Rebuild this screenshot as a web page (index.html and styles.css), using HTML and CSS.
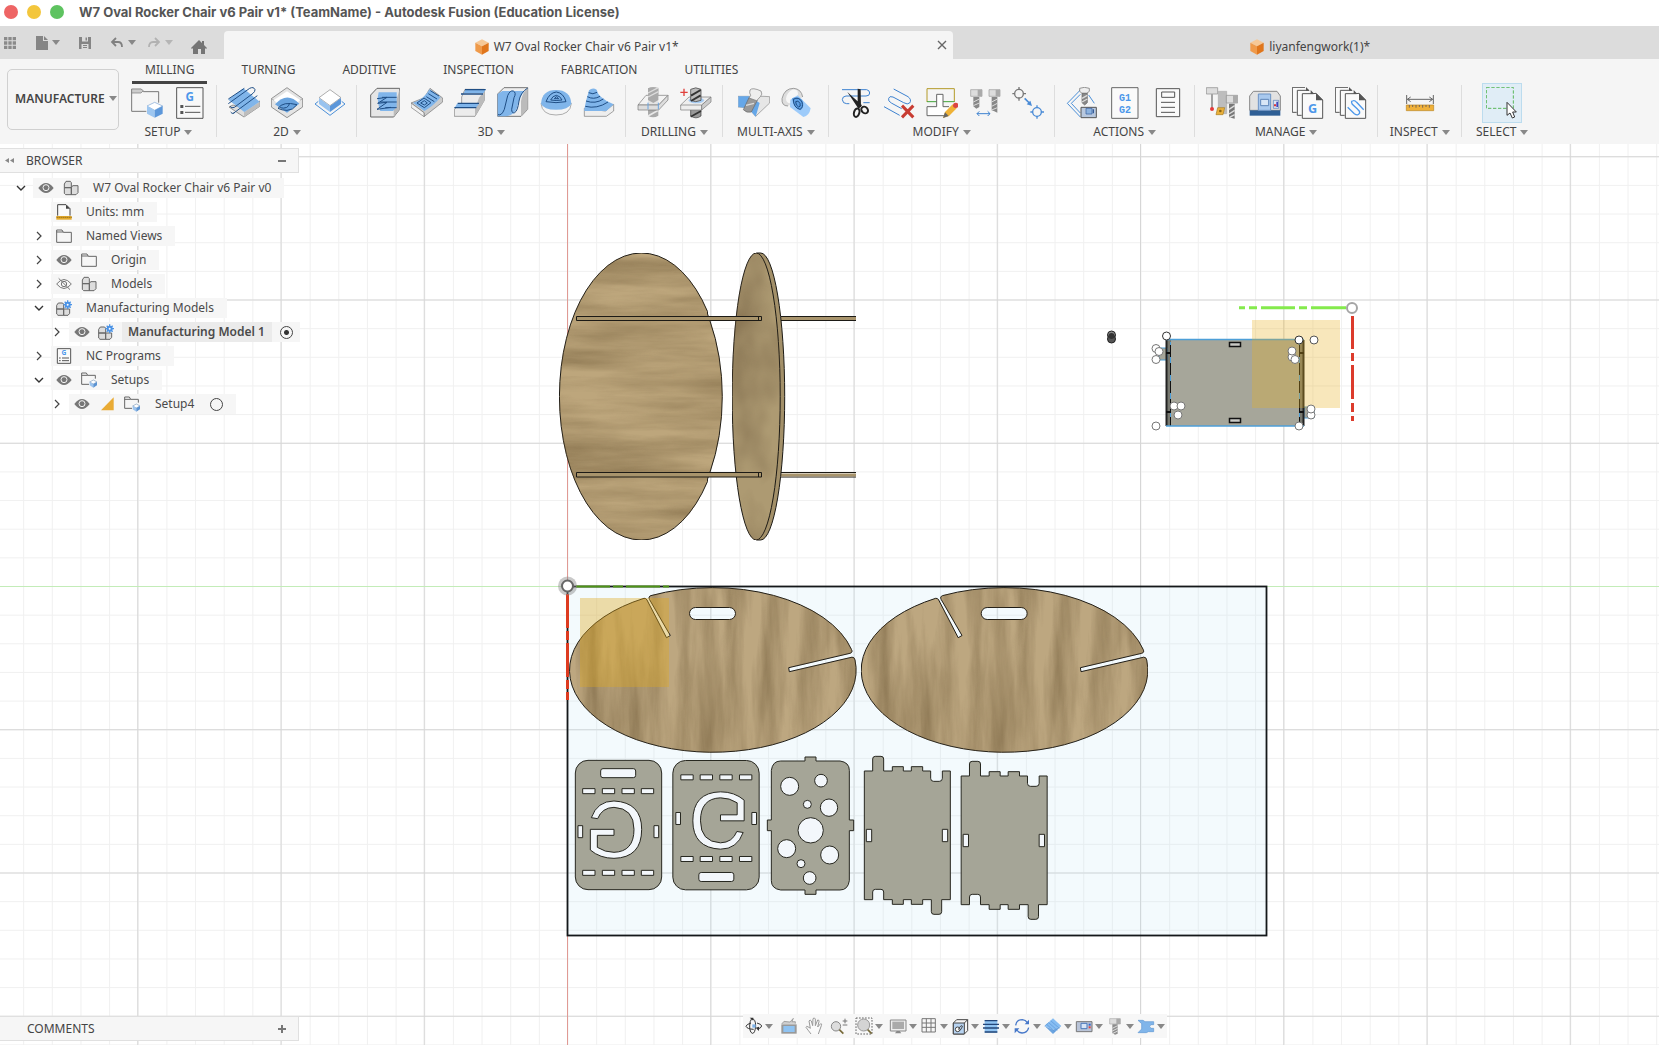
FILE: index.html
```html
<!DOCTYPE html>
<html lang="en">
<head>
<meta charset="utf-8">
<title>W7 Oval Rocker Chair v6 Pair v1* (TeamName) - Autodesk Fusion (Education License)</title>
<link rel="stylesheet" href="styles.css">
</head>
<body>
<svg class="sprites" width="0" height="0" aria-hidden="true">
  <symbol id="eye" viewBox="0 0 48 36"><path d="M1 18Q24 -12 47 18Q24 48 1 18Z" fill="#777"/><circle cx="24" cy="17" r="9" fill="none" stroke="#f4f4f4" stroke-width="3"/></symbol>
  <symbol id="eye-off" viewBox="0 0 48 36"><path d="M2 18Q24 -9 46 18Q24 45 2 18Z" fill="none" stroke="#777" stroke-width="3"/><circle cx="24" cy="18" r="8" fill="none" stroke="#777" stroke-width="3"/><path d="M8 1L42 35" stroke="#777" stroke-width="3"/></symbol>
  <symbol id="folder" viewBox="0 0 48 48"><path d="M2 11V43H46V13H22L18 6H2V12H22" fill="none" stroke="#666" stroke-width="3"/></symbol>
  <symbol id="component" viewBox="0 0 48 48"><path d="M4 23V12L9 4H22L25 8V23Z M4 23H25V44H8L4 40Z M25 23L29 17H45V38L39 44H25Z" fill="#ddd" stroke="#666" stroke-width="3" stroke-linejoin="round"/></symbol>
  <symbol id="mfg-model" viewBox="0 0 48 48"><path d="M2 27V16L7 9H20L23 13V27Z M2 27H23V46H6L2 42Z M23 27H41V40L36 46H23Z" fill="#ddd" stroke="#666" stroke-width="3" stroke-linejoin="round"/><circle cx="35" cy="14" r="9" fill="#4b93e6"/><path d="M35 1V27M22 14H48M26 5L44 23M44 5L26 23" stroke="#4b93e6" stroke-width="4"/><circle cx="35" cy="14" r="3" fill="#fff"/></symbol>
  <symbol id="setup-folder" viewBox="0 0 48 48"><path d="M24 37H2V3H16L20 10H43V20M2 10H20" fill="none" stroke="#666" stroke-width="3"/><path d="M37 24L48 30L37 36L26 30Z" fill="#fff" stroke="#7f9dbd" stroke-width="2"/><path d="M26 30V40L37 47V36Z" fill="#9bc3ee"/><path d="M48 30V40L37 47V36Z" fill="#5b93d2"/></symbol>
  <symbol id="orange-cube" viewBox="0 0 42 48"><path d="M21 1L41 11L21 22L1 11Z" fill="#f6c896"/><path d="M1 11L21 22V47L1 36Z" fill="#ef9a4a"/><path d="M41 11L21 22V47L41 36Z" fill="#e0761c"/></symbol>
  <symbol id="chev-right" viewBox="0 0 12 12"><path d="M4 2L8 6L4 10" fill="none" stroke="#444" stroke-width="1.2"/></symbol>
  <symbol id="chev-down" viewBox="0 0 12 12"><path d="M2 4L6 8L10 4" fill="none" stroke="#333" stroke-width="1.4"/></symbol>
</svg>

<header class="titlebar">
  <div class="lights"><span class="light red"></span><span class="light yellow"></span><span class="light green"></span></div>
  <h1>W7 Oval Rocker Chair v6 Pair v1* (TeamName) - Autodesk Fusion (Education License)</h1>
</header>

<div class="tabbar">
  <div class="quick">
    <button aria-label="Data panel"><svg width="12" height="12" viewBox="0 0 36 36"><path d="M0 0h10v10H0zM13 0h10v10H13zM26 0h10v10H26zM0 13h10v10H0zM13 13h10v10H13zM26 13h10v10H26zM0 26h10v10H0zM13 26h10v10H13zM26 26h10v10H26z" fill="#8a8a8a"/></svg></button>
    <button aria-label="File"><svg width="14" height="14" viewBox="0 0 14 14"><path d="M2 0h7v5h5v9H2z M10 0l4 4h-4z" fill="#858585"/></svg><i class="caret"></i></button>
    <button aria-label="Save"><svg width="14" height="14" viewBox="0 0 28 28"><path d="M2 2h24v24H2z" fill="#858585"/><path d="M8 2h12v9H8zM7 16h14v10H7z" fill="#dcdcdc"/><path d="M15 3h3v6h-3zM10 18h8v2h-8zM10 22h8v2h-8z" fill="#858585"/></svg></button>
    <div class="history">
      <button aria-label="Undo"><svg width="14" height="14" viewBox="0 0 14 14"><path d="M6 2L2 6L6 10M3 6H8Q12 6 12 11" fill="none" stroke="#808080" stroke-width="1.8"/></svg><i class="caret"></i></button>
      <button aria-label="Redo" class="faded"><svg width="14" height="14" viewBox="0 0 14 14"><path d="M8 2L12 6L8 10M11 6H6Q2 6 2 11" fill="none" stroke="#808080" stroke-width="1.8"/></svg><i class="caret"></i></button>
    </div>
    <button class="home" aria-label="Home"><svg width="16" height="14" viewBox="0 0 16 14"><path d="M8 0L11 3V1h2v4l3 3-1 1-1-1v6h-4V9H7v5H2V8L1 9 0 8z" fill="#757575"/></svg></button>
  </div>
  <div class="doc active"><a href="#doc1"><svg width="14" height="16"><use href="#orange-cube"/></svg>W7 Oval Rocker Chair v6 Pair v1*</a>
    <button class="close" aria-label="Close tab"><svg width="10" height="10" viewBox="0 0 10 10"><path d="M1 1L9 9M9 1L1 9" stroke="#666" stroke-width="1.4"/></svg></button></div>
  <div class="doc"><a href="#doc2"><svg width="14" height="16"><use href="#orange-cube"/></svg>liyanfengwork(1)*</a></div>
</div>

<div class="ribbon">
  <button class="workspace">MANUFACTURE<i class="caret"></i></button>
  <div class="ribbon-main">
    <nav class="modes">
      <a href="#milling" class="on">MILLING</a><a href="#turning">TURNING</a><a href="#additive">ADDITIVE</a><a href="#inspection">INSPECTION</a><a href="#fabrication">FABRICATION</a><a href="#utilities">UTILITIES</a>
    </nav>
    <div class="groups">
      <section class="group"><div class="icons">
        <button aria-label="Setup"><svg viewBox="396 258 96 96"><path d="M479 305V272H433L426 265H398V331H442" fill="none" stroke="#777" stroke-width="3"/><path d="M398 264H426L433 269L426 276H398Z" fill="#ccc" stroke="#777" stroke-width="2"/><path d="M467 304L491 315L467 328L444 315Z" fill="#fff" stroke="#7aa5d4" stroke-width="2"/><path d="M444 315L467 328V350L444 338Z" fill="#9dc6f0"/><path d="M491 315L467 328V350L491 338Z" fill="#5c97da"/></svg></button>
        <button aria-label="NC program"><svg viewBox="524 258 96 96"><path d="M532 260H611V352H532Z" fill="#f8f8f8" stroke="#555" stroke-width="3"/><text x="571" y="300" text-anchor="middle" font-size="35" font-weight="700" fill="#4c97ea">G</text><path d="M543 312h9v9h-9zM543 330h9v9h-9z" fill="#555"/><path d="M557 316H603M557 334H603" stroke="#555" stroke-width="3"/></svg></button>
      </div><button class="label">SETUP<i class="caret"></i></button></section>

      <section class="group"><div class="icons">
        <button aria-label="2D adaptive"><svg viewBox="687 258 96 96"><path d="M690 318L735 348L782 316V300L735 322L702 312Z" fill="#ddd" stroke="#666" stroke-width="2"/><path d="M735 334V348L782 316V302Z" fill="#bdbdbd"/><path d="M688 296L733 262L782 302L736 333Z" fill="#80b5ea"/><g fill="none" stroke="#1f4e85" stroke-width="3"><path d="M688 308L752 262Q764 256 768 266Q768 272 762 277L706 319Q698 323 693 316"/><path d="M688 294L736 262M703 337L775 284M695 333Q698 340 706 336"/></g></svg></button>
        <button aria-label="2D pocket"><svg viewBox="816 258 96 96"><path d="M817 293L864 260L911 293V318L864 350L817 318Z" fill="#e4e4e4" stroke="#666" stroke-width="2"/><path d="M817 293L864 322L911 293" fill="none" stroke="#999" stroke-width="2"/><path d="M824 298L864 271L904 298L864 334Z" fill="#fff"/><path d="M828 310Q864 270 901 308L864 335Z" fill="#6aa4df"/><path d="M837 322Q852 300 894 311Q882 328 864 328Q848 328 837 322M842 320Q868 326 872 306" fill="none" stroke="#1f4e85" stroke-width="3"/></svg></button>
        <button aria-label="2D contour"><svg viewBox="945 258 96 96"><path d="M948 309L993 343L1038 309L1028 301M948 309L958 301" fill="none" stroke="#4a8fd8" stroke-width="3"/><path d="M993 266L1026 290L993 314L960 290Z" fill="#fff" stroke="#888" stroke-width="2"/><path d="M960 291L993 315V333L960 309Z" fill="#98c3ef"/><path d="M1026 291L993 315V333L1026 309Z" fill="#5c97da"/></svg></button>
      </div><button class="label">2D<i class="caret"></i></button></section>

      <section class="group"><div class="icons">
        <button aria-label="3D adaptive"><svg viewBox="-7 258 96 96"><path d="M1 282L20 262H88V325L70 348H1Z" fill="#e6e6e6" stroke="#666" stroke-width="3"/><path d="M88 264V325L70 348V325Z" fill="#bbb"/><path d="M25 274H79V318L68 330H30Q18 300 25 274Z" fill="#80b5ea"/><path d="M79 289H35M79 303H30M79 320H45M20 293L50 289L22 307L50 304L20 325L62 319" fill="none" stroke="#1f4e85" stroke-width="3"/></svg></button>
        <button aria-label="3D pocket"><svg viewBox="126 258 96 96"><path d="M126 306L165 335V347L221 303V291L183 262L166 290Z" fill="#ccc" stroke="#777" stroke-width="2"/><path d="M126 306V319L165 347V335Z" fill="#f2f2f2" stroke="#777" stroke-width="2"/><path d="M132 305Q160 300 182 265L215 289Q190 318 166 330Z" fill="#80b5ea"/><path d="M144 306L165 291L186 305L166 320ZM155 306L166 299L175 306L166 312ZM172 287L196 302M178 278L204 294M184 269L210 285" fill="none" stroke="#1f4e85" stroke-width="3"/></svg></button>
        <button aria-label="Parallel"><svg viewBox="255 258 96 96"><path d="M256 325L278 306V288L288 265H346V298L318 346H256Z" fill="#ececec" stroke="#777" stroke-width="2"/><path d="M346 270V299L318 346V324L330 290Z" fill="#bbb"/><path d="M290 265H350L344 276H284ZM264 308H330L322 319H258Z" fill="#80b5ea"/><path d="M288 266H350M276 279H342M266 307H330M256 320H322" stroke="#1f4e85" stroke-width="4"/></svg></button>
        <button aria-label="Contour"><svg viewBox="386 258 96 96"><path d="M388 279L407 260H478V325L458 346H388Z" fill="#eee" stroke="#777" stroke-width="3"/><path d="M388 279L402 270H468Q452 290 446 320Q438 344 410 346H388Z" fill="#80b5ea"/><path d="M478 262V325L458 346V300Q462 275 478 262Z" fill="#bbb"/><path d="M389 341Q400 345 408 325L418 284Q425 267 435 270Q445 275 437 290L430 325Q430 338 439 335Q448 330 452 300Q456 275 478 261" fill="none" stroke="#1f4e85" stroke-width="3"/></svg></button>
        <button aria-label="Scallop"><svg viewBox="514 258 96 96"><path d="M517 307Q520 342 562 342Q605 342 608 307Z" fill="#f5f5f5" stroke="#888" stroke-width="2"/><path d="M517 308Q520 267 562 267Q605 267 608 308Q600 326 562 326Q525 326 517 308Z" fill="#80b5ea"/><path d="M532 302Q542 275 563 273Q585 276 592 302Q562 308 532 302ZM546 297Q552 284 563 283Q575 285 580 297Q562 300 546 297ZM557 293L563 287L570 293Z" fill="none" stroke="#1f4e85" stroke-width="3"/></svg></button>
        <button aria-label="Morphed spiral"><svg viewBox="643 258 96 96"><path d="M647 322V346H713L735 330V310L710 330Z" fill="#eee" stroke="#777" stroke-width="2"/><path d="M647 325L652 300L661 268Q672 258 684 266Q688 290 735 310L713 330H647Z" fill="#80b5ea"/><path d="M660 275Q673 282 685 274M656 287Q675 297 694 286M652 300Q680 310 704 294M650 316Q685 325 718 303" fill="none" stroke="#1f4e85" stroke-width="3"/></svg></button>
      </div><button class="label">3D<i class="caret"></i></button></section>

      <section class="group"><div class="icons">
        <button aria-label="Drill"><svg viewBox="803 258 96 96"><path d="M836 262Q851 256 867 262V344Q851 354 836 344Z" fill="#a9a9a9"/><path d="M836 345L867 328" stroke="#e8e8e8" stroke-width="5"/><path d="M806 312L830 283H896L868 312Z" fill="#f2f2f2" fill-opacity=".8" stroke="#777" stroke-width="2"/><path d="M806 312V327H868L896 297V283L868 312Z" fill="#ddd" stroke="#777" stroke-width="2"/><path d="M836 262Q851 256 867 262V297L852 306L836 297Z" fill="#aaa"/><path d="M836 288L867 272M836 276L867 260" stroke="#ddd" stroke-width="4"/><path d="M836 305V325M867 305V325" stroke="#6aa4df" stroke-width="3"/></svg></button>
        <button aria-label="Hole recognition"><svg viewBox="935 258 96 96"><path d="M967 320H998V345Q983 356 967 345Z" fill="#999" stroke="#333" stroke-width="2"/><path d="M967 347L998 330" stroke="#333" stroke-width="5"/><path d="M937 312L962 288H1028L1000 312V327H937Z" fill="#eee" stroke="#777" stroke-width="2"/><path d="M937 312H1000L1028 288V303L1000 327V312" fill="#ccc" stroke="#777" stroke-width="2"/><ellipse cx="984" cy="298" rx="23" ry="9" fill="#a9cdf3"/><path d="M967 265Q982 256 998 265V298Q982 306 967 298Z" fill="#bbb" stroke="#333" stroke-width="2"/><path d="M968 284L997 267M968 300L997 283" stroke="#333" stroke-width="6"/><path d="M936 274H958M947 263V285" stroke="#e0413c" stroke-width="4"/></svg></button>
      </div><button class="label">DRILLING<i class="caret"></i></button></section>

      <section class="group wide"><div class="icons">
        <button aria-label="Swarf"><svg viewBox="1107 258 96 96"><path d="M1107 286H1185L1202 287V306L1160 346L1137 320L1107 318Z" fill="#e6e6e6" stroke="#888" stroke-width="2"/><path d="M1108 286H1140L1172 306L1160 347L1138 322L1108 318Z" fill="#66a7e8"/><path d="M1140 290L1165 298L1147 333Q1133 337 1123 326Z" fill="#999" stroke="#666" stroke-width="2"/><path d="M1143 267Q1150 258 1176 270Q1182 280 1174 287L1163 299L1140 291L1145 283Q1140 276 1143 267Z" fill="#eee" stroke="#777" stroke-width="2"/><path d="M1131 313L1155 307" stroke="#ddd" stroke-width="4"/></svg></button>
        <button aria-label="Multi-axis contour"><svg viewBox="1237 258 96 96"><path d="M1258 315Q1238 315 1240 293Q1247 262 1275 262Q1298 264 1302 288" fill="#ddd" stroke="#777" stroke-width="2"/><ellipse cx="1270" cy="286" rx="15" ry="23" fill="#f7f7f7" transform="rotate(35 1270 286)"/><path d="M1265 296L1287 283L1326 322Q1322 345 1304 348L1264 318Z" fill="#9dcbfa"/><path d="M1270 292Q1290 283 1302 300Q1308 318 1296 328Q1275 325 1270 292Z" fill="#5d9fe4"/><path d="M1274 295Q1290 285 1300 303Q1305 320 1294 325Q1274 320 1274 295ZM1281 302Q1288 296 1294 307Q1297 318 1290 318Q1281 314 1281 302Z" fill="none" stroke="#1f4e85" stroke-width="3"/></svg></button>
      </div><button class="label">MULTI-AXIS<i class="caret"></i></button></section>

      <section class="group"><div class="icons">
        <button aria-label="Trim toolpath"><svg viewBox="120 198 96 96"><path d="M126 206H200Q209 208 209 216Q209 225 198 225H138Q127 226 127 236Q128 248 140 248H148M190 245H209" fill="none" stroke="#3d82d0" stroke-width="3"/><path d="M173 203L182 205L183 258L173 258ZM142 213L186 253L176 264Z" fill="#222"/><g fill="none" stroke="#222" stroke-width="6"><ellipse cx="170" cy="275" rx="8" ry="13" transform="rotate(15 170 275)"/><ellipse cx="194" cy="267" rx="9" ry="11" transform="rotate(-45 194 267)"/></g></svg></button>
        <button aria-label="Delete passes"><svg viewBox="250 198 96 96"><path d="M282 204L325 227Q337 236 330 246Q324 252 312 245L280 228Q269 224 267 232Q264 240 275 246L306 263M253 257L300 283" fill="none" stroke="#3d82d0" stroke-width="3"/><path d="M307 254L341 289M341 254L307 289" stroke="#c83c32" stroke-width="9"/></svg></button>
        <button aria-label="Edit boundary"><svg viewBox="376 198 96 96"><path d="M379 243V203H461V243" fill="none" stroke="#b39a28" stroke-width="3"/><path d="M379 242H409M427 242H461" stroke="#43a33b" stroke-width="3"/><path d="M440 284H379V257H408V220H427V257H445" fill="#fff" stroke="#666" stroke-width="3"/><path d="M427 291L433 273L456 250L468 262L445 285Z" fill="#efb237"/><path d="M427 291L433 274L444 285Z" fill="#666"/><circle cx="465" cy="253" r="8" fill="#db4540"/></svg></button>
        <button aria-label="Replace tool"><svg viewBox="506 198 96 96"><path d="M511 206H545V226H511ZM566 206H599V226H566Z" fill="#ddd" stroke="#999" stroke-width="2"/><path d="M532 206H545V226H532ZM586 206H599V226H586Z" fill="#aaa"/><path d="M519 228H537V258L528 263L519 256ZM574 228H591V275L582 271L574 268Z" fill="#888"/><path d="M519 243L537 234M519 254L537 246M574 243L591 234M574 256L591 247M574 267L591 260" stroke="#ddd" stroke-width="3"/><path d="M530 278H569M537 271L530 278L537 285M562 271L569 278L562 285" fill="none" stroke="#3d82d0" stroke-width="3"/></svg></button>
        <button aria-label="Move toolpath"><svg viewBox="636 198 96 96"><g fill="none" stroke-width="4"><g stroke="#777"><circle cx="657" cy="218" r="13"/><path d="M657 198V206M657 230V239M637 218H645M669 218H678"/></g><g stroke="#4a8bd6"><circle cx="711" cy="273" r="13"/><path d="M711 253V261M711 285V293M691 273H699M723 273H732"/></g></g><path d="M674 232L688 246" stroke="#4a8bd6" stroke-width="5"/><path d="M696 255L680 250L691 239Z" fill="#4a8bd6"/></svg></button>
      </div><button class="label">MODIFY<i class="caret"></i></button></section>

      <section class="group"><div class="icons">
        <button aria-label="Simulate"><svg viewBox="802 198 96 96"><path d="M845 207L806 247L845 288M845 220L818 247L845 276M870 222L887 247" fill="none" stroke="#4a8fd8" stroke-width="3"/><path d="M843 202Q857 196 872 202V211L864 217H850L843 211Z" fill="#eee" stroke="#666" stroke-width="2"/><path d="M850 217H866V245L858 252L850 245Z" fill="#888" stroke="#666" stroke-width="2"/><path d="M850 232L866 223M850 243L866 234" stroke="#ddd" stroke-width="4"/><path d="M847 259H893V290H847Z" fill="#b8c8de" stroke="#555" stroke-width="3"/><path d="M862 262H880V279H862Z" fill="#8db3df" stroke="#335c9a" stroke-width="2"/><path d="M884 265V277" stroke="#335c9a" stroke-width="4"/></svg></button>
        <button aria-label="Post process"><svg viewBox="926 198 96 96"><path d="M934 200H1013V292H934Z" fill="#fafafa" stroke="#666" stroke-width="3"/><g class="gcode"><text x="974" y="240">G1</text><text x="974" y="276">G2</text></g></svg></button>
        <button aria-label="Setup sheet"><svg viewBox="1056 198 96 96"><path d="M1069 203H1139V287H1069Z" fill="#fafafa" stroke="#555" stroke-width="3"/><path d="M1085 213H1124V229H1085ZM1083 244H1125M1083 259H1125M1083 274H1125" fill="none" stroke="#555" stroke-width="3"/></svg></button>
      </div><button class="label">ACTIONS<i class="caret"></i></button></section>

      <section class="group"><div class="icons">
        <button aria-label="Tool library"><svg viewBox="48 198 96 96"><path d="M49 200H83V219H49Z" fill="#ddd" stroke="#888" stroke-width="2"/><path d="M66 220V262" stroke="#777" stroke-width="4"/><circle cx="66" cy="264" r="6" fill="#e53b3b"/><path d="M85 211H110V278H85Z" fill="#bdbdbd" stroke="#aaa" stroke-width="2"/><path d="M83 260H104L99 281H78Z" fill="#eab03a" stroke="#a87b1f" stroke-width="2"/><circle cx="91" cy="270" r="4" fill="#8a6414"/><path d="M109 223H143V246H109Z" fill="#ddd" stroke="#888" stroke-width="2"/><path d="M129 223H143V246H129Z" fill="#aaa"/><path d="M117 248H134V293L117 289Z" fill="#777"/><path d="M117 265L134 254M117 279L134 268M117 290L134 281" stroke="#ddd" stroke-width="4"/></svg></button>
        <button aria-label="Machine library"><svg viewBox="177 198 96 96"><path d="M179 268V225L190 211H261L271 225V268Z" fill="#e2e2e2" stroke="#888" stroke-width="3"/><path d="M179 268H271V284H179Z" fill="#2f5f95"/><path d="M205 219H242V268H205Z" fill="#a9c9ee" stroke="#6d93c4" stroke-width="3"/><path d="M212 235H236V254H212Z" fill="#d8e6f6" stroke="#5d85b9" stroke-width="3"/><path d="M250 238H266V262H250Z" fill="#dce6f5" stroke="#5078b5" stroke-width="2"/><path d="M252 250H258V256H252Z" fill="#d33"/><path d="M259 242H264V258H259Z" fill="#44b"/></svg></button>
        <button aria-label="Post library"><svg viewBox="306 198 96 96"><path d="M345 199H307V274H320M357 208H322V283H335M369 218H337V292H398V237L378 217Z" fill="#fafafa" stroke="#555" stroke-width="3"/><path d="M348 198L359 209H348ZM362 207L373 219H362ZM378 216L399 238H378Z" fill="#555"/><text x="368" y="276" text-anchor="middle" font-size="38" font-weight="700" fill="#4c97ea">G</text></svg></button>
        <button aria-label="Template library"><svg viewBox="435 198 96 96"><path d="M474 199H436V274H449M486 208H451V283H464M498 218H466V292H527V237L507 217Z" fill="#fafafa" stroke="#555" stroke-width="3"/><path d="M477 198L488 209H477ZM491 207L502 219H491ZM507 216L528 238H507Z" fill="#555"/><path d="M473 259L493 278Q504 286 509 276Q510 270 503 265L487 250Q481 240 490 239Q495 238 500 244L521 266" fill="none" stroke="#4c97ea" stroke-width="4"/></svg></button>
      </div><button class="label">MANAGE<i class="caret"></i></button></section>

      <section class="group inspect"><div class="icons">
        <button aria-label="Measure"><svg viewBox="642 198 96 96"><path d="M650 222V249M730 222V249M652 235H728M662 228L652 235L662 242M718 228L728 235L718 242" fill="none" stroke="#666" stroke-width="3"/><path d="M649 252H731V269H649Z" fill="#f0b13a" stroke="#b98420" stroke-width="2"/><path d="M658 252V260M668 252V258M678 252V260M688 252V258M698 252V260M708 252V258M718 252V260" stroke="#765" stroke-width="3"/></svg></button>
      </div><button class="label">INSPECT<i class="caret"></i></button></section>

      <section class="group select"><div class="icons">
        <button class="pressed" aria-label="Select"><svg viewBox="886 198 96 96"><path d="M887 199H968V262H887Z" fill="none" stroke="#5cb85c" stroke-width="3" stroke-dasharray="10 5"/><path d="M949 244V283L958 276L965 291L972 288L966 273H977Z" fill="#fff" stroke="#333" stroke-width="3"/></svg></button>
      </div><button class="label">SELECT<i class="caret"></i></button></section>
    </div>
  </div>
</div>

<main class="viewport">
  <svg class="canvas" role="img" aria-label="Model view">
    <defs>
      <pattern id="minor" x="567.5" y="586" width="28.65" height="28.65" patternUnits="userSpaceOnUse"><path d="M0 .5H28.65M.5 0V28.65" stroke="#f0f0f0" fill="none"/></pattern>
      <pattern id="major" x="567" y="586" width="143.25" height="143.25" patternUnits="userSpaceOnUse"><path d="M0 .5H143.25M.5 0V143.25" stroke="#d6d6d6" fill="none"/></pattern>
      <filter id="grain-v" x="0" y="0" width="1" height="1" color-interpolation-filters="sRGB">
        <feTurbulence type="fractalNoise" baseFrequency="0.05 0.006" numOctaves="5" seed="7"/>
        <feColorMatrix values="0 0 0 0 .38  0 0 0 0 .3  0 0 0 0 .17  .9 0 0 0 -.3"/>
        <feComposite in2="SourceAlpha" operator="in" result="n"/>
        <feMerge><feMergeNode in="SourceGraphic"/><feMergeNode in="n"/></feMerge>
      </filter>
      <filter id="grain-h" x="0" y="0" width="1" height="1" color-interpolation-filters="sRGB">
        <feTurbulence type="fractalNoise" baseFrequency="0.006 0.05" numOctaves="5" seed="3"/>
        <feColorMatrix values="0 0 0 0 .38  0 0 0 0 .3  0 0 0 0 .17  .8 0 0 0 -.25"/>
        <feComposite in2="SourceAlpha" operator="in" result="n"/>
        <feMerge><feMergeNode in="SourceGraphic"/><feMergeNode in="n"/></feMerge>
      </filter>
      <filter id="grain-soft" x="0" y="0" width="1" height="1" color-interpolation-filters="sRGB">
        <feTurbulence type="fractalNoise" baseFrequency="0.025 0.015" numOctaves="3" seed="5"/>
        <feColorMatrix values="0 0 0 0 .38  0 0 0 0 .3  0 0 0 0 .2  .8 0 0 0 -.25"/>
        <feComposite in2="SourceAlpha" operator="in" result="n"/>
        <feMerge><feMergeNode in="SourceGraphic"/><feMergeNode in="n"/></feMerge>
      </filter>
      <path id="rocker" fill-rule="evenodd" d="M855 660A143.3 82 0 1 1 644 598.3Q646 598 647 600L666.5 637.7L670.3 635.5L649.5 599.5Q648 596.5 651 595.6A143.3 82 0 0 1 851.5 649.5Q853 652.5 850 653.3L788.7 667.7L789.3 671.7L852 657.2Q854.5 657 855 660ZM695.5 607.5H729.5a6 6 0 0 1 0 12H695.5a6 6 0 0 1 0 -12Z"/>
      <g id="seat-plate">
        <rect x="46" y="46" width="259" height="388" rx="38"/>
        <g class="hole">
          <rect x="122" y="71" width="105" height="27" rx="7"/>
          <path d="M68 131h37v15h-37zM127 131h37v15h-37zM186 131h37v15h-37zM244 131h37v15h-37zM68 376h37v15h-37zM127 376h37v15h-37zM186 376h37v15h-37zM244 376h37v15h-37zM54 242h14v36h-14zM282 242h14v36h-14z"/>
          <path d="M94 218Q112 168 162 168Q245 172 245 253Q245 338 162 340Q120 340 91 315V253H162V271H112V307Q135 322 162 322Q222 320 222 253Q222 190 162 187Q126 188 113 221Z"/>
        </g>
      </g>
      <g id="side-plate">
        <path d="M73 78H98V42Q98 34 106 34H123Q131 34 131 42V78H157V65H190V78H214V65H248V78H272V100Q272 109 281 109H298Q307 109 307 100V78H331V464H305V500Q305 508 297 508H282Q274 508 274 500V464H248V478H214V464H190V478H157V464H131V441Q131 433 123 433H106Q98 433 98 441V464H73Z"/>
        <path class="hole" d="M79 253h16v37h-16zM307 253h16v37h-16z"/>
      </g>
    </defs>
    <g transform="translate(0 -144)">
      <rect y="144" width="100%" height="100%" fill="url(#minor)"/>
      <rect y="144" width="100%" height="100%" fill="url(#major)"/>
      <path d="M567.5 144V4000" stroke="#e09a94"/>
      <path d="M0 586.5H6000" stroke="#c3ecb8"/>

      <!-- assembled chair, side view -->
      <g stroke="#1c1a15">
        <path d="M781 316.5H856M781 320.5H856M781 472.5H856M781 477H856"/>
        <path d="M781 318.5H856M781 475H856" stroke="#a8946c" stroke-width="3"/>
        <path d="M707.5 311.5V314L710 321A82 143.500 0 0 1 710 472L707.5 479V481.5A82 143.500 0 1 1 707.5 311.500Z" fill="#bda67c" filter="url(#grain-h)"/>
        <path d="M756.2 253H760.7A24 143.5 0 0 1 760.7 540H756.2Z" fill="#a39069"/>
        <ellipse cx="756.2" cy="396.5" rx="24" ry="143.5" fill="#ad9a72" filter="url(#grain-soft)"/>
        <path d="M576.5 316.5H761.5V320.5H576.5ZM576.5 472.5H761.5V477H576.5ZM758.5 316.5V320.5M758.5 472.5V477" fill="#a8946c"/>
      </g>

      <!-- second setup -->
      <circle cx="1111.5" cy="335" r="4" fill="#888" stroke="#222"/><circle cx="1111.5" cy="339" r="4" fill="#555" stroke="#222"/><circle cx="1111.5" cy="336" r="3" fill="#333"/>
      <rect x="1166" y="339.5" width="138" height="86.5" fill="#a6a69a"/>
      <path d="M1166 340H1171V426H1166ZM1299 340H1304V426H1299Z" fill="#77786f"/>
      <path d="M1159 348H1167V360H1159ZM1304 407H1314V418H1304Z" fill="#a6a69a" stroke="#4d9fd8"/>
      <path d="M1166.5 340V426M1303.5 340V426" stroke="#222" stroke-width="2"/>
      <path d="M1170.5 342V426M1299.5 342V426" stroke="#4d9fd8"/>
      <path d="M1170.5 345V426M1299.5 345V426" stroke="#111" stroke-dasharray="12 6"/>
      <path d="M1166 353H1171M1166 412H1171M1299 353H1304M1299 412H1304" stroke="#111" stroke-width="2"/>
      <path d="M1166 339.5H1304M1166 426H1304" stroke="#4d9fd8" stroke-width="1.5"/>
      <path d="M1229.5 342.5h11v4h-11zM1229.5 418.5h11v4h-11z" fill="#c9c9c4" stroke="#111" stroke-width="1.5"/>
      <rect x="1252" y="320" width="88" height="88" fill="#e9ae1e" fill-opacity=".3"/>
      <path d="M1239 307.700h6M1249 307.700h8M1261 307.700h34M1299 307.700h8M1311 307.700h35" stroke="#84ea4c" stroke-width="3"/>
      <path d="M1352.500 316v33M1352.500 353v8M1352.500 365v34M1352.500 403v9M1352.500 416v5" stroke="#dc3b2c" stroke-width="3"/>
      <circle cx="1352" cy="308" r="5" fill="#fff" stroke="#a5a5a5" stroke-width="2"/>
      <g fill="#fff" stroke="#777">
        <circle cx="1166.5" cy="336" r="4" stroke="#333"/><circle cx="1156" cy="348.5" r="4"/><circle cx="1159" cy="351.5" r="4"/><circle cx="1156" cy="359.5" r="4"/>
        <circle cx="1174" cy="406" r="4"/><circle cx="1181" cy="406" r="4"/><circle cx="1178" cy="415" r="4"/><circle cx="1156" cy="426" r="4"/>
        <circle cx="1299" cy="340" r="4" stroke="#333"/><circle cx="1314" cy="340" r="4" stroke="#555"/><circle cx="1292" cy="357" r="4"/><circle cx="1292" cy="351" r="4"/><circle cx="1295" cy="359.5" r="4"/>
        <circle cx="1311" cy="415" r="4"/><circle cx="1311" cy="409" r="4"/><circle cx="1299" cy="426" r="4"/>
      </g>

      <!-- stock sheet with nested parts -->
      <rect x="567.5" y="586.5" width="699" height="349" fill="#bfe4f2" fill-opacity=".18" stroke="#14181a" stroke-width="1.8"/>
      <use href="#rocker" fill="#bda780" stroke="#1c1a15" filter="url(#grain-v)"/>
      <use href="#rocker" x="291.7" fill="#bda780" stroke="#1c1a15" filter="url(#grain-v)"/>
      <rect x="580" y="598" width="89" height="89" fill="#e0a91c" fill-opacity=".38"/>
      <g class="plate" transform="translate(560 745) scale(.33333)">
        <use href="#seat-plate"/>
        <use href="#seat-plate" transform="rotate(180 321.75 240.25)"/>
        <path d="M662 48H735V36H768V48H840Q868 52 868 76V225H881V257H868V407Q864 435 840 435H768V448H735V435H662Q634 431 634 407V257H622V225H634V76Q638 48 662 48Z"/>
        <g class="hole"><circle cx="689" cy="124" r="27"/><circle cx="783" cy="107" r="19"/><circle cx="742" cy="178" r="12"/><circle cx="807" cy="188" r="26"/><circle cx="752" cy="256" r="38"/><circle cx="680" cy="311" r="27"/><circle cx="809" cy="330" r="27"/><circle cx="723" cy="356" r="12"/><circle cx="749" cy="399" r="19"/></g>
      </g>
      <g class="plate" transform="translate(840 745) scale(.33333)">
        <use href="#side-plate"/><use href="#side-plate" x="290.5" y="15"/>
      </g>
      <path d="M576 586.5H669" stroke="#4d9416" stroke-width="2" stroke-dasharray="34 3 10 3"/>
      <path d="M567.5 594V700" stroke="#dd3b20" stroke-width="3" stroke-dasharray="34 3 9 3"/>
      <circle cx="567.5" cy="586" r="9.5" fill="#888" fill-opacity=".45"/><circle cx="567.5" cy="586" r="5.5" fill="#fff" stroke="#666" stroke-width="2"/>
    </g>
  </svg>

  <aside class="browser">
    <div class="panel-head"><button aria-label="Collapse"><svg width="9" height="7" viewBox="0 0 9 7"><path d="M4 1V6L0 3.5ZM9 1V6L5 3.5Z" fill="#888"/></svg></button><h2>BROWSER</h2><button aria-label="Minimize"><svg width="10" height="10" viewBox="0 0 10 10"><path d="M1 5H9" stroke="#777" stroke-width="2"/></svg></button></div>
    <ul class="tree">
      <li><svg class="chev"><use href="#chev-down"/></svg><span class="chip"><svg><use href="#eye"/></svg><svg><use href="#component"/></svg><b>W7 Oval Rocker Chair v6 Pair v0</b></span></li>
      <li class="l1"><span class="chev"></span><span class="chip"><svg viewBox="0 0 48 48"><path d="M5 35V2H30L42 14V35" fill="#fafafa" stroke="#444" stroke-width="3"/><path d="M30 2V14H42Z" fill="#444"/><path d="M1 36H47V47H1Z" fill="#e3a92b"/><path d="M2 40H47" stroke="#7a5a12" stroke-width="3" stroke-dasharray="3 3"/></svg><b>Units: mm</b></span></li>
      <li class="l1"><svg class="chev"><use href="#chev-right"/></svg><span class="chip"><svg><use href="#folder"/></svg><b>Named Views</b></span></li>
      <li class="l1"><svg class="chev"><use href="#chev-right"/></svg><span class="chip"><svg><use href="#eye"/></svg><svg><use href="#folder"/></svg><b>Origin</b></span></li>
      <li class="l1"><svg class="chev"><use href="#chev-right"/></svg><span class="chip"><svg><use href="#eye-off"/></svg><svg><use href="#component"/></svg><b>Models</b></span></li>
      <li class="l1"><svg class="chev"><use href="#chev-down"/></svg><span class="chip"><svg><use href="#mfg-model"/></svg><b>Manufacturing Models</b></span></li>
      <li class="l2"><svg class="chev"><use href="#chev-right"/></svg><span class="chip current"><svg><use href="#eye"/></svg><svg><use href="#mfg-model"/></svg><label for="mm1">Manufacturing Model 1</label><input type="radio" id="mm1" name="model" checked></span></li>
      <li class="l1"><svg class="chev"><use href="#chev-right"/></svg><span class="chip"><svg viewBox="0 0 48 48"><path d="M4 2H44V46H4Z" fill="#fafafa" stroke="#555" stroke-width="3"/><text x="24" y="22" font-size="20" font-weight="700" fill="#4c97ea" text-anchor="middle">G</text><path d="M9 30H14M9 38H14M18 30H39M18 38H39" stroke="#555" stroke-width="3"/></svg><b>NC Programs</b></span></li>
      <li class="l1"><svg class="chev"><use href="#chev-down"/></svg><span class="chip"><svg><use href="#eye"/></svg><svg><use href="#setup-folder"/></svg><b>Setups</b></span></li>
      <li class="l2"><svg class="chev"><use href="#chev-right"/></svg><span class="chip"><svg><use href="#eye"/></svg><svg viewBox="0 0 48 48"><path d="M44 4V43H6Z" fill="#e9ab35"/></svg><svg><use href="#setup-folder"/></svg><label for="s4">Setup4</label><input type="radio" id="s4" name="setup"></span></li>
    </ul>
  </aside>

  <footer class="bottom">
    <div class="panel-head comments"><h2>COMMENTS</h2><button aria-label="Add comment"><svg width="10" height="10" viewBox="0 0 10 10"><path d="M1 5H9M5 1V9" stroke="#777" stroke-width="2"/></svg></button></div>
    <div class="nav-wrap"><div class="nav">
      <div class="nav-a">
        <button aria-label="Orbit"><svg viewBox="0 0 54 54"><path d="M20 5Q32 5 32 27Q30 50 22 49Q14 46 14 27Q14 12 20 5M18 18Q4 22 3 28Q6 36 26 37M36 18Q50 22 50 27Q48 34 38 36" fill="none" stroke="#333" stroke-width="3"/><path d="M14 2H25V11ZM32 32L42 29V42Z" fill="#333"/><path d="M22 22H32V32H22Z" fill="#80b5ea"/></svg><i class="caret"></i></button>
        <button aria-label="Look at"><svg viewBox="0 0 54 54"><path d="M4 22V50H50V22Z" fill="#999"/><path d="M10 27H44V45H10Z" fill="#8fc3f2"/><path d="M5 21L12 13L30 15L40 4L36 14H46V20" fill="#ccc" stroke="#888" stroke-width="2"/></svg></button>
        <button aria-label="Pan"><svg viewBox="0 0 54 54"><path d="M18 51Q8 38 3 31Q3 25 12 31L16 34L12 12Q15 6 19 12L23 26L24 5Q28 0 31 6L31 26L38 9Q43 8 42 14L38 30L47 20Q52 20 49 26L40 51" fill="#fafafa" stroke="#999" stroke-width="3"/></svg></button>
        <button aria-label="Zoom"><svg viewBox="0 0 54 54"><circle cx="18" cy="28" r="14" fill="#ddd" stroke="#888" stroke-width="3"/><path d="M28 38L40 50" stroke="#776a3a" stroke-width="5"/><path d="M38 12H52M45 5V19M38 24H52" stroke="#777" stroke-width="3"/></svg></button>
        <button aria-label="Fit"><svg viewBox="0 0 54 54"><path d="M3 3H51V51H3Z" fill="none" stroke="#666" stroke-width="3" stroke-dasharray="5 4"/><circle cx="26" cy="24" r="18" fill="#d4d4d4" stroke="#999" stroke-width="3"/><path d="M38 38L50 50" stroke="#776a3a" stroke-width="5"/></svg><i class="caret"></i></button>
      </div>
      <div class="nav-b">
        <button aria-label="Display settings"><svg viewBox="0 0 54 54"><path d="M4 9H51V42H4Z" fill="#eee" stroke="#888" stroke-width="3"/><path d="M10 14H45V36H10Z" fill="#aaa"/><path d="M18 49H37L32 42H23Z" fill="#888"/></svg><i class="caret"></i></button>
        <button aria-label="Grid"><svg viewBox="0 0 54 54"><path d="M6 5H46V45H6ZM6 18H46M6 31H46M19 5V45M33 5V45" fill="none" stroke="#777" stroke-width="3"/></svg><i class="caret"></i></button>
        <button aria-label="Stock visibility"><svg viewBox="0 0 54 54"><path d="M7 18L17 8H50V41L40 51H7Z" fill="#f5f5f5" stroke="#444" stroke-width="3"/><path d="M7 18H40V51H7ZM40 18L50 8" fill="#b7d3f1" stroke="#444" stroke-width="3"/><circle cx="20" cy="37" r="7" fill="#fff" stroke="#444" stroke-width="3"/><path d="M22 38Q30 22 34 27Q34 34 26 41" fill="none" stroke="#444" stroke-width="3"/></svg><i class="caret"></i></button>
        <button aria-label="Toolpath visibility"><svg viewBox="0 0 54 54"><path d="M8 9H46V47H8Z" fill="#8fc3f2"/><path d="M8 11H46M3 22H51M3 33H51M8 45H46" stroke="#234578" stroke-width="4"/></svg><i class="caret"></i></button>
        <button aria-label="Regenerate"><svg viewBox="0 0 54 54"><path d="M8 25Q10 8 28 8Q38 9 43 17M47 32Q43 48 27 48Q16 47 11 39" fill="none" stroke="#4577c9" stroke-width="4"/><path d="M48 8V22H35ZM5 49V34H19Z" fill="#4577c9"/></svg><i class="caret"></i></button>
        <button aria-label="Material"><svg viewBox="0 0 54 54"><path d="M27 4L52 27L27 38L2 27Z" fill="#86bdf2"/><path d="M2 27L27 51V38ZM52 27L27 51V38Z" fill="#6ba4e0"/><path d="M2 27L14 17L40 40M8 22L33 45M20 11L46 34" fill="none" stroke="#5b95d6" stroke-width="2"/></svg><i class="caret"></i></button>
        <button aria-label="Machine"><svg viewBox="0 0 54 54"><path d="M4 14H51V44H4Z" fill="#b9c4d8" stroke="#777" stroke-width="3"/><path d="M18 19H36V35H18Z" fill="#d7e5f7" stroke="#4a79bb" stroke-width="3"/><path d="M41 20H47V26H41Z" fill="#36c"/><path d="M41 28H47V34H41Z" fill="#d44"/></svg><i class="caret"></i></button>
        <button aria-label="Tool"><svg viewBox="0 0 54 54"><path d="M11 5H43V21H11Z" fill="#ddd" stroke="#aaa" stroke-width="2"/><path d="M31 5H43V21H31Z" fill="#aaa"/><path d="M19 22H35V50L27 53L19 48Z" fill="#8d8d8d"/><path d="M19 34L35 26M19 42L35 34M19 50L35 42" stroke="#ddd" stroke-width="3"/></svg><i class="caret"></i></button>
        <button aria-label="Holder"><svg viewBox="0 0 54 54"><path d="M3 10H18L24 14H50V23H42Q34 28 42 34H50V44H34L28 47H3L14 36V20Z" fill="#80b5ea" stroke="#5f97d1" stroke-width="2"/></svg><i class="caret"></i></button>
      </div>
    </div></div>
  </footer>
</main>
</body>
</html>
```
FILE: styles.css
```css
* { box-sizing: border-box; }
body {
  margin: 0;
  height: 100vh;
  display: flex;
  flex-direction: column;
  overflow: hidden;
  background: #fff;
  color: #444;
  font: 12px/16px "Noto Sans", "Liberation Sans", sans-serif;
}
button { margin: 0; padding: 0; border: 0; background: none; color: inherit; font: inherit; display: flex; align-items: center; }
a { color: inherit; text-decoration: none; }
svg { display: block; flex: none; }
.sprites { position: absolute; }
.caret { flex: none; border: 4px solid transparent; border-top: 5px solid #888; border-bottom: 0; }

.titlebar { display: flex; align-items: center; gap: 15px; height: 26px; padding: 0 4px 3px; }
.titlebar h1 { margin: 0; font: 700 13px/20px Inter, "Liberation Sans", sans-serif; color: #555; white-space: nowrap; }
.lights { display: flex; gap: 9px; }
.light { width: 14px; height: 14px; border-radius: 50%; }
.red { background: #ee6565; }
.yellow { background: #f3c63c; }
.green { background: #5ec360; }

.tabbar { display: flex; align-items: flex-end; height: 33px; background: #dcdcdc; }
.quick { display: flex; align-items: center; gap: 18px; width: 224px; height: 33px; padding: 0 4px; }
.quick button { gap: 4px; }
.history { display: flex; gap: 11px; }
.faded { opacity: .45; }
.home { padding-top: 8px; }
.doc { flex: 40 1 0; display: flex; align-items: center; height: 28px; padding-top: 4px; }
.doc a { flex: 1; display: flex; justify-content: center; gap: 5px; padding-left: 8px; }
.doc.active { flex-grow: 41; background: #f5f5f5; border-radius: 4px 4px 0 0; padding-right: 6px; }
.doc.active a { padding: 0 8px 0 0; }
.close { padding: 0 0 4px; }

.ribbon { display: flex; height: 85px; padding-left: 7px; background: #f5f5f5; }
.workspace { flex: none; gap: 4px; width: 112px; height: 61px; margin: 10px 1px 0 0; padding: 0 0 2px 7px; border: 1px solid #d0d0d0; border-radius: 5px; font-weight: 600; }
.ribbon-main { flex: 1; min-width: 0; }
.modes { display: flex; gap: 21px; height: 25px; padding-left: 12px; }
.modes a { height: 25px; padding: 3px 13px 0; line-height: 16px; border-bottom: 3px solid transparent; }
.modes .on { border-color: #444; }
.groups { display: flex; padding-top: 1px; }
.group { display: flex; flex-direction: column; align-items: center; height: 52px; padding: 0 10px 0 11px; border-right: 1px solid #ddd; }
.wide { padding: 0 13px 0 14px; }
.inspect { width: 84px; }
.select { width: 80px; border: 0; }
.icons { flex: none; display: flex; align-items: center; gap: 11px; height: 36px; }
.icons svg { width: 32px; height: 32px; }
.gcode { font: 700 30px "Liberation Mono", monospace; fill: #4c97ea; text-anchor: middle; }
.pressed { padding: 3px; border: 1px solid #bcdcee; background: #e0edf6; }
.label { flex: none; gap: 4px; height: 21px; padding-top: 1px; white-space: nowrap; }

.viewport { position: relative; flex: 1; min-height: 0; display: flex; flex-direction: column; justify-content: space-between; }
.canvas { position: absolute; inset: 0; width: 100%; height: 100%; }
.plate { fill: #a5a597; stroke: #26261f; stroke-width: 3; }
.hole { fill: #f3f7fb; }

.browser, .bottom { position: relative; }
.browser { width: 299px; padding-top: 4px; }
.panel-head { display: flex; align-items: center; height: 25px; padding: 0 11px 0 5px; background: #f6f6f6; border: 1px solid #e0e0e0; border-left: 0; }
.panel-head h2 { flex: 1; margin: 0 0 0 12px; font: inherit; }
.tree { list-style: none; margin: 0; padding: 3px 0 0; color: #4a4a4a; }
.tree li { display: flex; align-items: center; gap: 6px; height: 24px; padding-left: 15px; }
.tree .l1 { padding-left: 33px; }
.tree .l2 { padding-left: 51px; }
.chev { flex: none; width: 12px; height: 12px; }
.chip { display: flex; align-items: center; gap: 9px; height: 20px; padding: 0 13px 0 5px; background: #f6f6f6; white-space: nowrap; }
.chip svg { width: 16px; height: 16px; }
.chip b { font-weight: 400; padding-left: 5px; }
.chip label { padding: 2px 7px 2px 6px; }
.current { padding-right: 7px; gap: 8px; }
.current label { background: #ebebeb; font-weight: 600; }
.current input { margin-left: -3px; }
.chip input { appearance: none; width: 13px; height: 13px; margin: 0; border: 1px solid #444; border-radius: 50%; }
.chip input:checked { background: radial-gradient(circle, #333 2px, transparent 3px); }

.bottom { display: flex; align-items: flex-start; padding-bottom: 4px; }
.comments { width: 299px; margin-top: 2px; padding-left: 15px; }
.nav-wrap { flex: 1; display: flex; justify-content: center; padding-right: 48px; }
.nav { display: flex; gap: 6px; height: 24px; padding: 0 2px; background: #f7f7f7; }
.nav-a, .nav-b { display: flex; align-items: center; gap: 7px; }
.nav-b { gap: 3px; }
.nav button { gap: 2px; }
.nav svg { width: 18px; height: 18px; }
```
